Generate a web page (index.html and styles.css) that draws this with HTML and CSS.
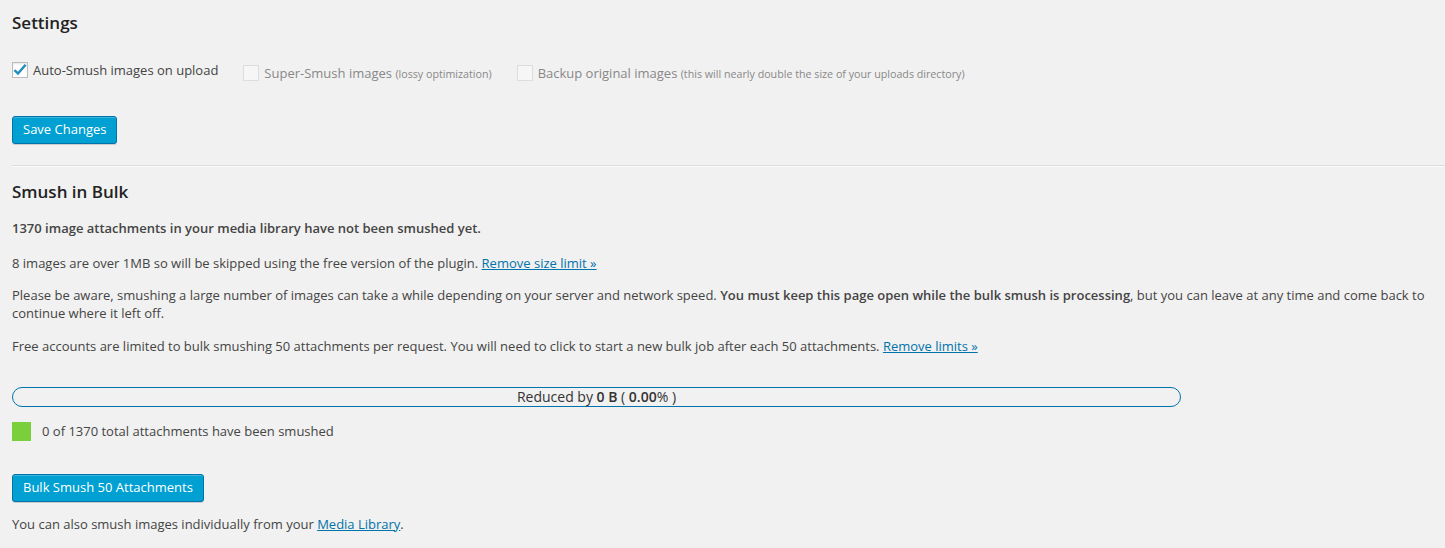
FILE: index.html
```html
<!DOCTYPE html>
<html lang="en">
<head>
    <meta charset="UTF-8">
    <title>WP Smush</title>
    <link rel="stylesheet" href="styles.css">
</head>
<body>

<div class="wrap">
    <h3 class="title">Settings</h3>
    <form class="settings">
        <div class="options">
            <label class="option checked-opt">
                <span class="box checked">
                    <svg width="14" height="14" viewBox="0 0 14 14"><path d="M1.5 7.2 L5 10.6 L12.6 1.8" fill="none" stroke="#1e8cbe" stroke-width="2.4"/></svg>
                </span>
                <span>Auto-Smush images on upload</span>
            </label>
            <label class="option disabled">
                <span class="box"></span>
                <span>Super-Smush images <small>(lossy optimization)</small></span>
            </label>
            <label class="option disabled">
                <span class="box"></span>
                <span>Backup original images <small>(this will nearly double the size of your uploads directory)</small></span>
            </label>
        </div>
        <button type="button" class="button-primary">Save Changes</button>
    </form>

    <hr>

    <h3 class="title">Smush in Bulk</h3>
    <p class="lead"><strong>1370 image attachments in your media library have not been smushed yet.</strong></p>
    <p>8 images are over 1MB so will be skipped using the free version of the plugin. <a href="#">Remove size limit &raquo;</a></p>
    <p>Please be aware, smushing a large number of images can take a while depending on your server and network speed. <strong>You must keep this page open while the bulk smush is processing</strong>, but you can leave at any time and come back to continue where it left off.</p>
    <p>Free accounts are limited to bulk smushing 50 attachments per request. You will need to click to start a new bulk job after each 50 attachments. <a href="#">Remove limits &raquo;</a></p>

    <div class="progress">
        <span>Reduced by <strong>0 B</strong> ( <strong>0.00</strong>% )</span>
    </div>
    <div class="status">
        <span class="legend"></span>
        <span>0 of 1370 total attachments have been smushed</span>
    </div>

    <button type="button" class="button-primary bulk">Bulk Smush 50 Attachments</button>
    <p class="note">You can also smush images individually from your <a href="#">Media Library</a>.</p>
</div>

</body>
</html>
```

FILE: styles.css
```css
body {
    margin: 0;
    background-color: #f1f1f1;
    color: #444;
    font-family: "Open Sans", sans-serif;
    font-size: 13px;
    line-height: 1.4;
}
.wrap {
    padding: 0 0 0 12px;
}
.title {
    font-size: 17px;
    font-weight: 600;
    color: #222;
    margin: 0;
}
.wrap > .title:first-child {
    padding-top: 11px;
}
.options {
    display: flex;
    align-items: flex-start;
    gap: 25px;
    margin-top: 26px;
}
.option {
    display: flex;
    align-items: center;
    font-size: 13px;
    color: #444;
}
.option.disabled {
    margin-top: 3px;
    color: #888;
}
.option small {
    font-size: 10.7px;
}
.box {
    width: 14px;
    height: 14px;
    border: 1px solid #bbb;
    background: #fff;
    box-shadow: inset 0 1px 2px rgba(0, 0, 0, 0.1);
    margin-right: 5px;
    display: flex;
    align-items: center;
    justify-content: center;
}
.disabled .box {
    border-color: #ddd;
    background: rgba(255, 255, 255, 0.4);
    box-shadow: none;
}
.button-primary {
    display: block;
    background: #00a0d2;
    border: 1px solid #0073aa;
    border-radius: 3px;
    color: #fff;
    font-family: "Open Sans", sans-serif;
    font-size: 13px;
    height: 28px;
    padding: 0 10px 1px;
    box-shadow: inset 0 1px 0 rgba(120, 200, 230, 0.5), 0 1px 0 rgba(0, 0, 0, 0.15);
    cursor: pointer;
}
.settings .button-primary {
    margin-top: 34px;
}
hr {
    border: 0;
    border-top: 1px solid #ddd;
    border-bottom: 1px solid #fafafa;
    margin: 21px 0 13px;
}
p {
    margin: 14px 0;
}
strong {
    font-weight: 600;
}
p.lead {
    margin: 15px 0 17px;
}
a {
    color: #0073aa;
}
.progress {
    width: 1167px;
    height: 18px;
    border: 1px solid #0073aa;
    border-radius: 10px;
    text-align: center;
    font-size: 14px;
    line-height: 18px;
    margin-top: 32px;
    color: #333;
}
.status {
    display: flex;
    align-items: center;
    margin-top: 15px;
}
.legend {
    width: 19px;
    height: 19px;
    background: #7ad03a;
    margin-right: 11px;
}
.bulk {
    margin-top: 33px;
}
.note {
    margin-top: 13px;
}
```
